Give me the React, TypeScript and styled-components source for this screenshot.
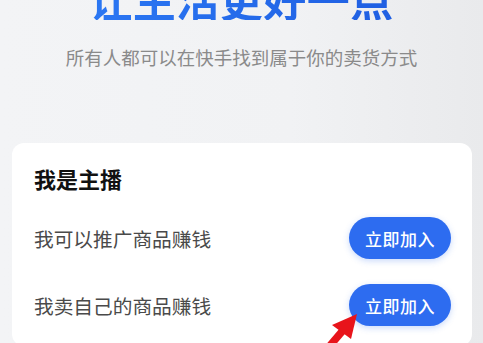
import React from "react";
import styled, { createGlobalStyle } from "styled-components";

const Global = createGlobalStyle`
  html, body { margin: 0; padding: 0; }
  body {
    font-family: "Noto Sans CJK SC", "Noto Sans", sans-serif;
    width: 483px;
    height: 343px;
    overflow: hidden;
  }
`;

const Page = styled.div`
  position: relative;
  width: 483px;
  height: 343px;
  overflow: hidden;
  display: flex;
  flex-direction: column;
  align-items: center;
  background: linear-gradient(90deg, #f3f4f6 0%, #f1f2f4 60%, #e9eaec 100%);
`;

const Title = styled.h1`
  margin: -23px 0 0;
  font-size: 43px;
  line-height: 43px;
  font-weight: 700;
  letter-spacing: 0.5px;
  background: linear-gradient(90deg, #2b77f3, #1f5fe2);
  -webkit-background-clip: text;
  background-clip: text;
  color: transparent;
`;

const Subtitle = styled.p`
  margin: 25px 0 0;
  font-size: 18.5px;
  line-height: 24px;
  color: #8a8a8a;
`;

const Card = styled.section`
  align-self: flex-start;
  margin: 74px 0 0 12px;
  width: 460px;
  box-sizing: border-box;
  padding: 21px 21px 20px 22px;
  background: #ffffff;
  border-radius: 12px;
  display: flex;
  flex-direction: column;
`;

const CardTitle = styled.h2`
  margin: 0;
  font-size: 22px;
  line-height: 28px;
  font-weight: 700;
  color: #111111;
`;

const Rows = styled.div`
  margin-top: 25px;
  display: flex;
  flex-direction: column;
  gap: 25px;
`;

const Row = styled.div`
  display: flex;
  align-items: center;
  justify-content: space-between;
  height: 42px;
`;

const RowText = styled.span`
  font-size: 19.7px;
  color: #4a4a4a;
`;

const JoinButton = styled.button`
  width: 102px;
  height: 42px;
  border: none;
  border-radius: 21px;
  background: #2d6cf0;
  color: #ffffff;
  font-family: inherit;
  font-size: 17px;
  font-weight: 500;
  letter-spacing: 0.5px;
  box-shadow: 0 2px 6px rgba(45, 108, 240, 0.25);
  padding: 0;
`;

const Arrow = styled.svg`
  position: absolute;
  left: 0;
  top: 0;
  pointer-events: none;
`;

const rows = ["我可以推广商品赚钱", "我卖自己的商品赚钱"];

export default function App() {
  return (
    <>
      <Global />
      <Page>
        <Title>让生活更好一点</Title>
        <Subtitle>所有人都可以在快手找到属于你的卖货方式</Subtitle>
        <Card>
          <CardTitle>我是主播</CardTitle>
          <Rows>
            {rows.map((r) => (
              <Row key={r}>
                <RowText>{r}</RowText>
                <JoinButton>立即加入</JoinButton>
              </Row>
            ))}
          </Rows>
        </Card>
        <Arrow width="483" height="343" viewBox="0 0 483 343">
          <line x1="322" y1="355" x2="345" y2="328" stroke="#e8141b" strokeWidth="7.5" />
          <polygon points="357,314 332,325 351,339" fill="#e8141b" />
        </Arrow>
      </Page>
    </>
  );
}
